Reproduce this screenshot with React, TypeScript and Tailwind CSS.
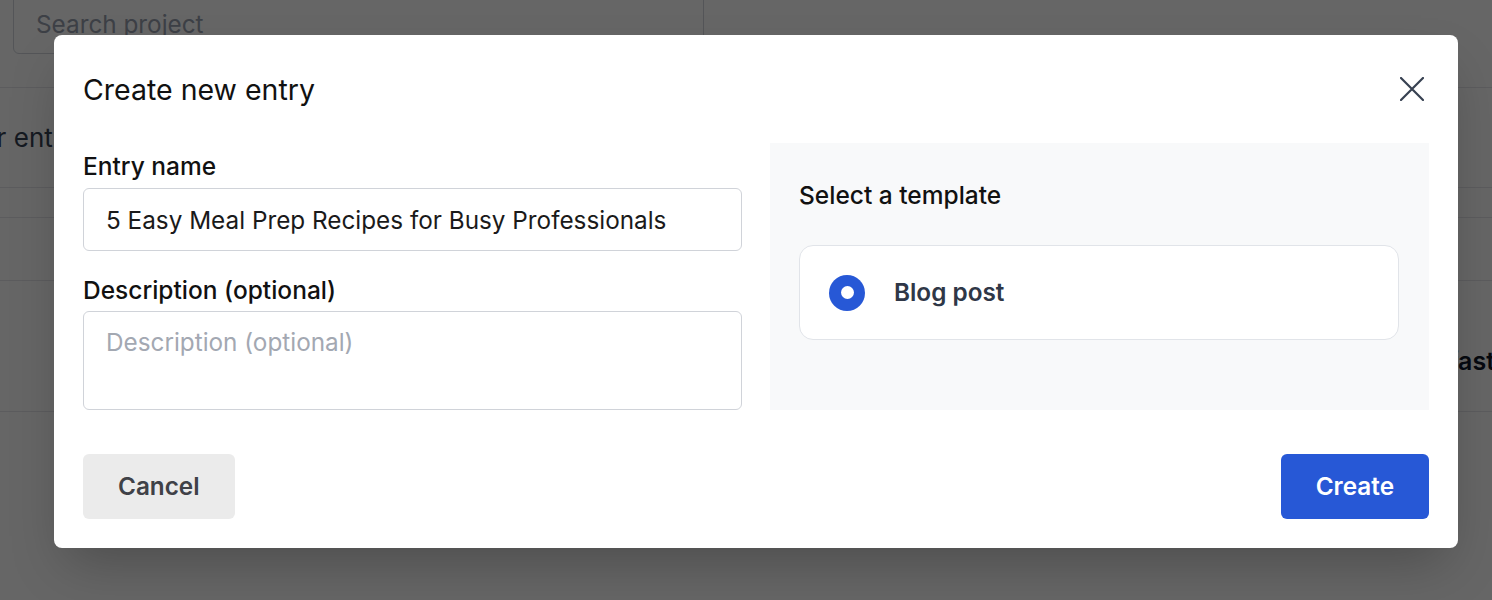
import { useState } from 'react';

const font = { fontFamily: 'Inter, "Noto Sans", sans-serif' };

function BackgroundPage() {
  return (
    <div className="w-[1492px] h-[600px] bg-white overflow-hidden">
      {/* Header with search */}
      <div className="h-[88px] border-b border-gray-200 flex">
        <div className="ml-[13px] mt-[-12px] w-[691px] h-[66px] border border-gray-300 rounded-md flex items-end pb-[14px] pl-[22px]">
          <span className="text-[24.3px] leading-[30px] text-gray-400">Search project</span>
        </div>
      </div>
      <div className="h-[100px] border-b border-gray-200 flex items-center">
        <span className="ml-[-50px] text-[26px] text-gray-700 mt-[-1px]">Your entries</span>
      </div>
      <div className="h-[30px] border-b border-gray-200" />
      <div className="h-[63px] border-b border-gray-200" />
      <div className="h-[131px] border-b border-gray-200 flex items-end justify-end pb-[31px]">
        <span className="mr-[-3px] text-[25px] font-semibold text-gray-900">Breakfast</span>
      </div>
    </div>
  );
}

export default function App() {
  const [name, setName] = useState('5 Easy Meal Prep Recipes for Busy Professionals');
  const [desc, setDesc] = useState('');

  return (
    <div className="relative w-[1492px] h-[600px] overflow-hidden" style={font}>
      <BackgroundPage />

      {/* Overlay */}
      <div className="absolute inset-0 bg-black/60">
        <div className="absolute left-[54px] top-[35px] w-[1404px] bg-white rounded-lg shadow-2xl px-[29px] pt-[36px] pb-[29px]">
          {/* Title row */}
          <div className="flex items-center justify-between h-[36px]">
            <h2 className="text-[28.5px] leading-[36px] text-[#111111] mt-[2px]">Create new entry</h2>
            <button className="w-[34px] h-[34px] flex items-center justify-center text-[#374151]">
              <svg width="24" height="24" viewBox="0 0 24 24" fill="none" stroke="currentColor" strokeWidth="2.2" strokeLinecap="round">
                <path d="M1 1L23 23M23 1L1 23" />
              </svg>
            </button>
          </div>

          {/* Body */}
          <div className="mt-[36px] grid grid-cols-2 gap-[28px]">
            <div className="flex flex-col pt-[3px]">
              <label className="text-[24.5px] leading-[40px] font-medium text-[#111111] mb-[2px]">Entry name</label>
              <input
                value={name}
                onChange={(e) => setName(e.target.value)}
                className="h-[63px] w-full border border-[#d0d3d9] rounded-md px-[22px] text-[24.3px] text-[#1a1a1a] outline-none"
              />
              <label className="mt-[19px] text-[24.5px] leading-[40px] font-medium text-[#111111] mb-[1px]">
                Description (optional)
              </label>
              <textarea
                value={desc}
                onChange={(e) => setDesc(e.target.value)}
                placeholder="Description (optional)"
                className="h-[99px] w-full border border-[#d0d3d9] rounded-md px-[22px] pt-[14px] text-[24.3px] leading-[32px] text-[#1a1a1a] placeholder-[#a3a8b2] resize-none outline-none"
              />
            </div>

            <div className="bg-[#f8f9fa] pl-[29px] pr-[30px] pt-[32px]">
              <p className="text-[24.5px] leading-[40px] font-medium text-[#111111] mb-[30px]">Select a template</p>
              <div className="h-[95px] bg-white border border-[#e1e4e9] rounded-[14px] flex items-center pl-[29px] gap-[29px]">
                <span className="w-[36px] h-[36px] rounded-full bg-[#2758d6] flex items-center justify-center">
                  <span className="w-[13px] h-[13px] rounded-full bg-white" />
                </span>
                <span className="text-[24.3px] font-semibold text-[#2f3747]">Blog post</span>
              </div>
            </div>
          </div>

          {/* Footer */}
          <div className="mt-[44px] flex items-center justify-between">
            <button className="h-[65px] px-[35px] rounded-md bg-[#ebebeb] text-[24.3px] font-semibold text-[#3f4147]">
              Cancel
            </button>
            <button className="h-[65px] px-[35px] rounded-md bg-[#2758d6] text-[24.3px] font-semibold text-white">
              Create
            </button>
          </div>
        </div>
      </div>
    </div>
  );
}
